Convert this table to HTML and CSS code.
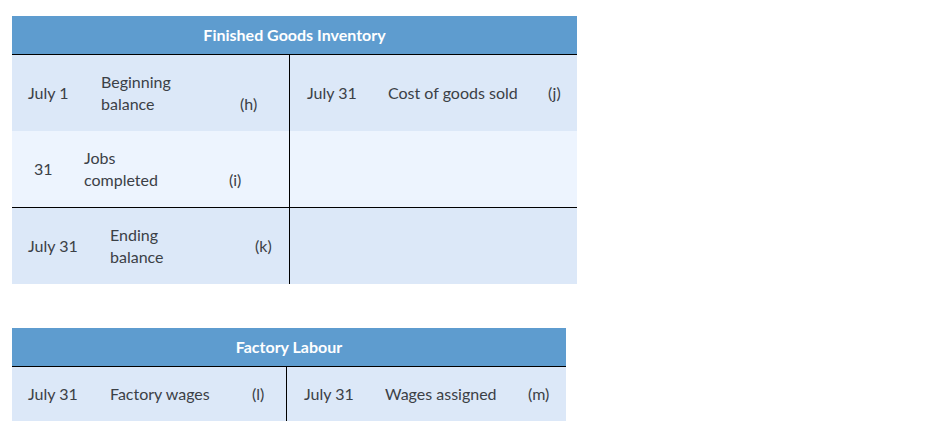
FILE: index.html
```html
<!DOCTYPE html>
<html>
<head>
<meta charset="utf-8">
<link rel="stylesheet" href="styles.css">
</head>
<body>
<div class="page">
  <section class="taccount taccount--inv">
    <div class="taccount__title">Finished Goods Inventory</div>
    <div class="taccount__body">
      <div class="row row--dark">
        <div class="side side--left">
          <div class="date date--w73">July 1</div>
          <div class="desc desc--w139">Beginning<br>balance</div>
          <div class="amt amt--low">(h)</div>
        </div>
        <div class="side side--right">
          <div class="date date--w81">July 31</div>
          <div class="desc desc--w160">Cost of goods sold</div>
          <div class="amt">(j)</div>
        </div>
      </div>
      <div class="row row--light">
        <div class="side side--left side--pad22">
          <div class="date date--w50">31</div>
          <div class="desc desc--w145">Jobs<br>completed</div>
          <div class="amt amt--low">(i)</div>
        </div>
        <div class="side side--right"></div>
      </div>
      <div class="row row--dark row--ruled">
        <div class="side side--left">
          <div class="date date--w82">July 31</div>
          <div class="desc desc--w145">Ending<br>balance</div>
          <div class="amt">(k)</div>
        </div>
        <div class="side side--right"></div>
      </div>
    </div>
  </section>

  <section class="taccount taccount--lab">
    <div class="taccount__title">Factory Labour</div>
    <div class="taccount__body">
      <div class="row row--dark row--short">
        <div class="side side--left side--lab">
          <div class="date date--w82">July 31</div>
          <div class="desc desc--w142">Factory wages</div>
          <div class="amt">(l)</div>
        </div>
        <div class="side side--right">
          <div class="date date--w81">July 31</div>
          <div class="desc desc--w143">Wages assigned</div>
          <div class="amt">(m)</div>
        </div>
      </div>
    </div>
  </section>
</div>
</body>
</html>
```

FILE: styles.css
```css
html, body {
  margin: 0;
  padding: 0;
  background: #ffffff;
}

.page {
  padding: 16px 12px;
  display: flex;
  flex-direction: column;
  align-items: flex-start;
  gap: 44px;
  font-family: Lato, "Liberation Sans", sans-serif;
  font-size: 16px;
  line-height: 22px;
  color: #3b4046;
}

.taccount--inv { width: 565px; }
.taccount--lab { width: 554px; }

.taccount__title {
  height: 38px;
  background: #5e9ccf;
  color: #ffffff;
  font-weight: 700;
  display: flex;
  align-items: center;
  justify-content: center;
  border-bottom: 1px solid #000;
}

.taccount__body {
  display: flex;
  flex-direction: column;
}

.row {
  display: grid;
  height: 76px;
}
.taccount--inv .row { grid-template-columns: 277px 1fr; }
.taccount--lab .row { grid-template-columns: 274px 1fr; }

.row--short { height: 54px; }
.row--dark { background: #dce8f8; }
.row--light { background: #edf4fe; }
.row--ruled { border-top: 1px solid #000; height: 76px; }

.side {
  display: flex;
  align-items: center;
  padding-left: 16px;
}
.side--right {
  border-left: 1px solid #000;
  padding-left: 17px;
}
.side--pad22 { padding-left: 22px; }

.date--w73 { width: 73px; }
.date--w81 { width: 81px; }
.date--w82 { width: 82px; }
.date--w50 { width: 50px; }

.desc--w139 { width: 139px; }
.desc--w145 { width: 145px; }
.desc--w142 { width: 142px; }
.desc--w143 { width: 143px; }
.desc--w160 { width: 160px; }

.amt--low { margin-top: 22px; }
```
